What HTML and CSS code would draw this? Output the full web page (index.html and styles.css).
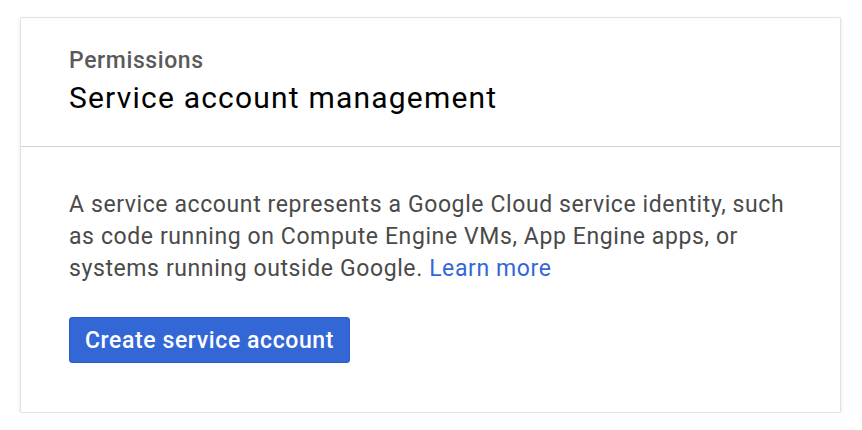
FILE: index.html
```html
<!DOCTYPE html>
<html>
<head>
<meta charset="utf-8">
<link rel="stylesheet" href="styles.css">
</head>
<body>
<div class="card">
  <div class="card-head">
    <div class="eyebrow">Permissions</div>
    <div class="title">Service account management</div>
  </div>
  <div class="card-body">
    <p class="desc">A service account represents a Google Cloud service identity, such as code running on Compute Engine VMs, App Engine apps, or systems running outside Google. <a class="link" href="#">Learn more</a></p>
    <button class="btn">Create service account</button>
  </div>
</div>
</body>
</html>
```
FILE: styles.css
```css
html, body { margin: 0; padding: 0; background: #fff; }
body { padding: 17px 21px 0 20px; font-family: Roboto, "Noto Sans", sans-serif; }
.card {
  background: #fff;
  border: 1px solid #e2e2e2;
  border-radius: 2px;
  box-shadow: 0 2px 4px rgba(0,0,0,0.10);
  height: 396px;
  box-sizing: border-box;
}
.card-head {
  padding: 29px 48px 0 48px;
  height: 129px;
  box-sizing: border-box;
  border-bottom: 1px solid #d2d2d2;
}
.eyebrow { font-size: 23px; font-weight: 500; color: #5a5a5a; line-height: 28px; letter-spacing: 0.6px; }
.title { font-size: 30px; color: #000; line-height: 36px; margin-top: 5px; letter-spacing: 1.2px; }
.card-body { padding: 42px 40px 0 48px; }
.desc { margin: 0; font-size: 23px; line-height: 32px; color: #4a4a4a; letter-spacing: 0.6px; }
.link { color: #3367d6; text-decoration: none; }
.btn {
  display: block;
  margin-top: 32px;
  background: #3367d6;
  color: #fff;
  border: 1px solid #2a5bc8;
  border-radius: 3px;
  font-family: Roboto, sans-serif;
  font-size: 23px;
  font-weight: 500;
  letter-spacing: 0.6px;
  height: 46px;
  width: 281px;
  padding: 0;
}
```
